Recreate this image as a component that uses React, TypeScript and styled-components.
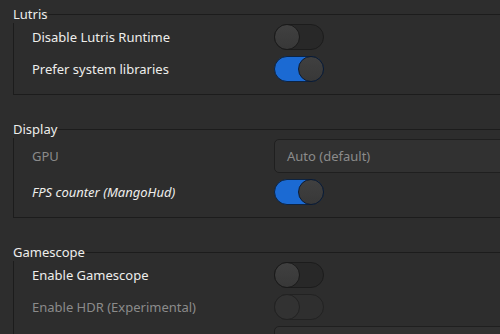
import styled, { createGlobalStyle } from "styled-components";

const GlobalStyle = createGlobalStyle`
  html, body {
    margin: 0;
    background: #2d2d2d;
    overflow: hidden;
  }
  body {
    font-family: "Noto Sans", "Open Sans", sans-serif;
    font-size: 13px;
    color: #eeeeec;
  }
`;

interface SwitchProps {
  on?: boolean;
  disabled?: boolean;
}

const Switch = ({ on = false, disabled = false }: SwitchProps) => (
  <Track $on={on} $disabled={disabled}>
    <Knob $on={on} $disabled={disabled} />
  </Track>
);

interface RowProps {
  label?: string;
  dim?: boolean;
  italic?: boolean;
  children: React.ReactNode;
}

const Row = ({ label, dim, italic, children }: RowProps) => (
  <RowGrid>
    <Label $dim={dim} $italic={italic}>
      {label}
    </Label>
    <Control>{children}</Control>
  </RowGrid>
);

export default function App() {
  return (
    <>
      <GlobalStyle />
      <Page>
        <Frame>
          <Legend>Lutris</Legend>
          <FrameBody>
            <Row label="Disable Lutris Runtime">
              <Switch />
            </Row>
            <Row label="Prefer system libraries">
              <Switch on />
            </Row>
          </FrameBody>
        </Frame>

        <Frame>
          <Legend>Display</Legend>
          <FrameBody>
            <Row label="GPU" dim>
              <Combo>Auto (default)</Combo>
            </Row>
            <Row label="FPS counter (MangoHud)" italic>
              <Switch on />
            </Row>
          </FrameBody>
        </Frame>

        <Frame>
          <Legend>Gamescope</Legend>
          <FrameBody>
            <Row label="Enable Gamescope">
              <Switch />
            </Row>
            <Row label="Enable HDR (Experimental)" dim>
              <Switch disabled />
            </Row>
            <Row>
              <Combo />
            </Row>
          </FrameBody>
        </Frame>
      </Page>
    </>
  );
}

const Page = styled.div`
  width: 640px;
  height: 334px;
  box-sizing: border-box;
  padding: 5px 0 0 13px;
  border-left: 2px solid #272727;
  margin-left: -2px;
  display: flex;
  flex-direction: column;
  gap: 25px;
`;

const Frame = styled.fieldset`
  margin: 0;
  padding: 0;
  min-width: 0;
  border: 1px solid #1c1c1c;
`;

const Legend = styled.legend`
  padding: 0;
  margin-left: -1px;
  line-height: 18px;
  font-size: 13px;
  color: #eeeeec;
`;

const FrameBody = styled.div`
  padding: 1px 0 12px 18px;
  display: flex;
  flex-direction: column;
  gap: 6px;
`;

const RowGrid = styled.div`
  display: grid;
  grid-template-columns: 242px 1fr;
  align-items: center;
  min-height: 26px;
`;

const Label = styled.span<{ $dim?: boolean; $italic?: boolean }>`
  color: ${(p) => (p.$dim ? "#8b8b8b" : "#eeeeec")};
  font-style: ${(p) => (p.$italic ? "italic" : "normal")};
`;

const Control = styled.div`
  display: flex;
  align-items: center;
`;

const Combo = styled.div`
  flex: 1;
  height: 34px;
  box-sizing: border-box;
  display: flex;
  align-items: center;
  padding: 0 12px;
  border: 1px solid #1f1f1f;
  border-radius: 5px;
  background: #313131;
  color: #8b8b8b;
`;

const Track = styled.span<{ $on: boolean; $disabled: boolean }>`
  position: relative;
  display: inline-block;
  width: 50px;
  height: 26px;
  box-sizing: border-box;
  border-radius: 13px;
  border: 1px solid
    ${(p) => (p.$on ? "#0c2444" : p.$disabled ? "#222222" : "#1c1c1c")};
  background: ${(p) =>
    p.$on ? "#1b6ad3" : p.$disabled ? "#2f2f2f" : "#282828"};
`;

const Knob = styled.span<{ $on: boolean; $disabled: boolean }>`
  position: absolute;
  top: -1px;
  left: ${(p) => (p.$on ? "23px" : "-1px")};
  width: 26px;
  height: 26px;
  box-sizing: border-box;
  border-radius: 50%;
  border: 1px solid
    ${(p) => (p.$on ? "#0c1a30" : p.$disabled ? "#222222" : "#1a1a1a")};
  background: ${(p) =>
    p.$disabled ? "#323232" : "linear-gradient(#404040, #383838)"};
`;
